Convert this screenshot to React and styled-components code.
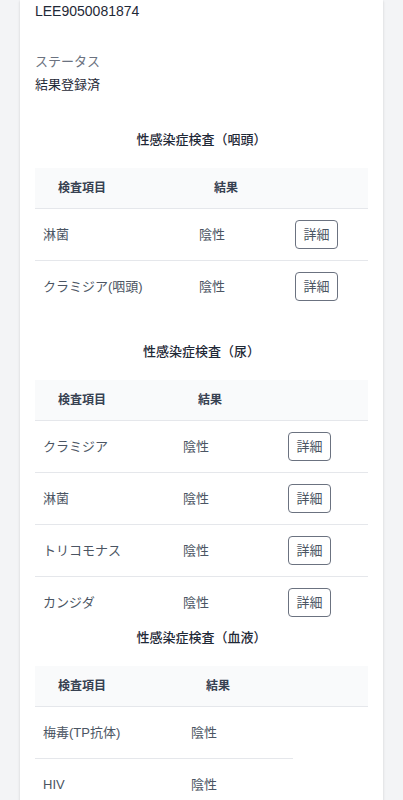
import React from "react";
import styled, { createGlobalStyle } from "styled-components";

const GlobalStyle = createGlobalStyle`
  body {
    margin: 0;
    background: #f3f4f6;
    font-family: "Liberation Sans", "Noto Sans CJK JP", sans-serif;
  }
`;

const Page = styled.div`
  padding: 0 20px;
`;

const Card = styled.div`
  background: #ffffff;
  box-shadow: 0 1px 3px rgba(0, 0, 0, 0.1), 0 1px 2px rgba(0, 0, 0, 0.06);
  padding: 1px 15px 40px;
`;

const IdValue = styled.div`
  font-size: 14px;
  line-height: 20px;
  color: #1f2937;
`;

const Field = styled.div`
  margin-top: 31px;
`;

const Label = styled.div`
  font-size: 13px;
  line-height: 20px;
  color: #6b7280;
  margin-bottom: 3px;
`;

const Value = styled.div`
  font-size: 13px;
  line-height: 20px;
  color: #1f2937;
`;

const Section = styled.section`
  margin-top: ${(p) => p.$gap}px;
`;

const Title = styled.h3`
  margin: 0 0 18px;
  text-align: center;
  font-size: 13px;
  line-height: 20px;
  font-weight: 500;
  color: #1f2937;
`;

const Table = styled.table`
  width: 100%;
  table-layout: fixed;
  border-collapse: collapse;
`;

const Th = styled.th`
  text-align: left;
  padding: 12px 23px;
  font-size: 12px;
  line-height: 16px;
  font-weight: 600;
  color: #374151;
  background: #f9fafb;
  border-bottom: 1px solid #e5e7eb;
`;

const Row = styled.tr`
  &:last-child td {
    border-bottom: none;
  }
`;

const Td = styled.td`
  padding: 11px 8px;
  font-size: 13px;
  line-height: 29px;
  color: #4b5563;
  border-bottom: 1px solid #e5e7eb;
  vertical-align: middle;
  white-space: nowrap;
`;

const DetailButton = styled.button`
  display: block;
  box-sizing: border-box;
  width: 43px;
  height: 29px;
  padding: 0;
  border: 1px solid #6b7280;
  border-radius: 4px;
  background: #ffffff;
  color: #4b5563;
  font-family: inherit;
  font-size: 13px;
  line-height: 27px;
`;

const sections = [
  {
    title: "性感染症検査（咽頭）",
    gap: 35,
    cols: [156, 96, 81],
    detail: true,
    rows: [
      ["淋菌", "陰性"],
      ["クラミジア(咽頭)", "陰性"],
    ],
  },
  {
    title: "性感染症検査（尿）",
    gap: 30,
    cols: [140, 105, 88],
    detail: true,
    rows: [
      ["クラミジア", "陰性"],
      ["淋菌", "陰性"],
      ["トリコモナス", "陰性"],
      ["カンジダ", "陰性"],
    ],
  },
  {
    title: "性感染症検査（血液）",
    gap: 0,
    cols: [148, 110, 75],
    detail: false,
    rows: [
      ["梅毒(TP抗体)", "陰性"],
      ["HIV", "陰性"],
    ],
  },
];

export default function App() {
  return (
    <>
      <GlobalStyle />
      <Page>
        <Card>
          <IdValue>LEE9050081874</IdValue>
          <Field>
            <Label>ステータス</Label>
            <Value>結果登録済</Value>
          </Field>
          {sections.map((s) => (
            <Section key={s.title} $gap={s.gap}>
              <Title>{s.title}</Title>
              <Table>
                <colgroup>
                  {s.cols.map((w, i) => (
                    <col key={i} style={{ width: w }} />
                  ))}
                </colgroup>
                <thead>
                  <tr>
                    <Th>検査項目</Th>
                    <Th>結果</Th>
                    <Th />
                  </tr>
                </thead>
                <tbody>
                  {s.rows.map((r, i) => (
                    <Row key={i}>
                      <Td>{r[0]}</Td>
                      <Td>{r[1]}</Td>
                      {s.detail && (
                        <Td>
                          <DetailButton type="button">詳細</DetailButton>
                        </Td>
                      )}
                    </Row>
                  ))}
                </tbody>
              </Table>
            </Section>
          ))}
        </Card>
      </Page>
    </>
  );
}
